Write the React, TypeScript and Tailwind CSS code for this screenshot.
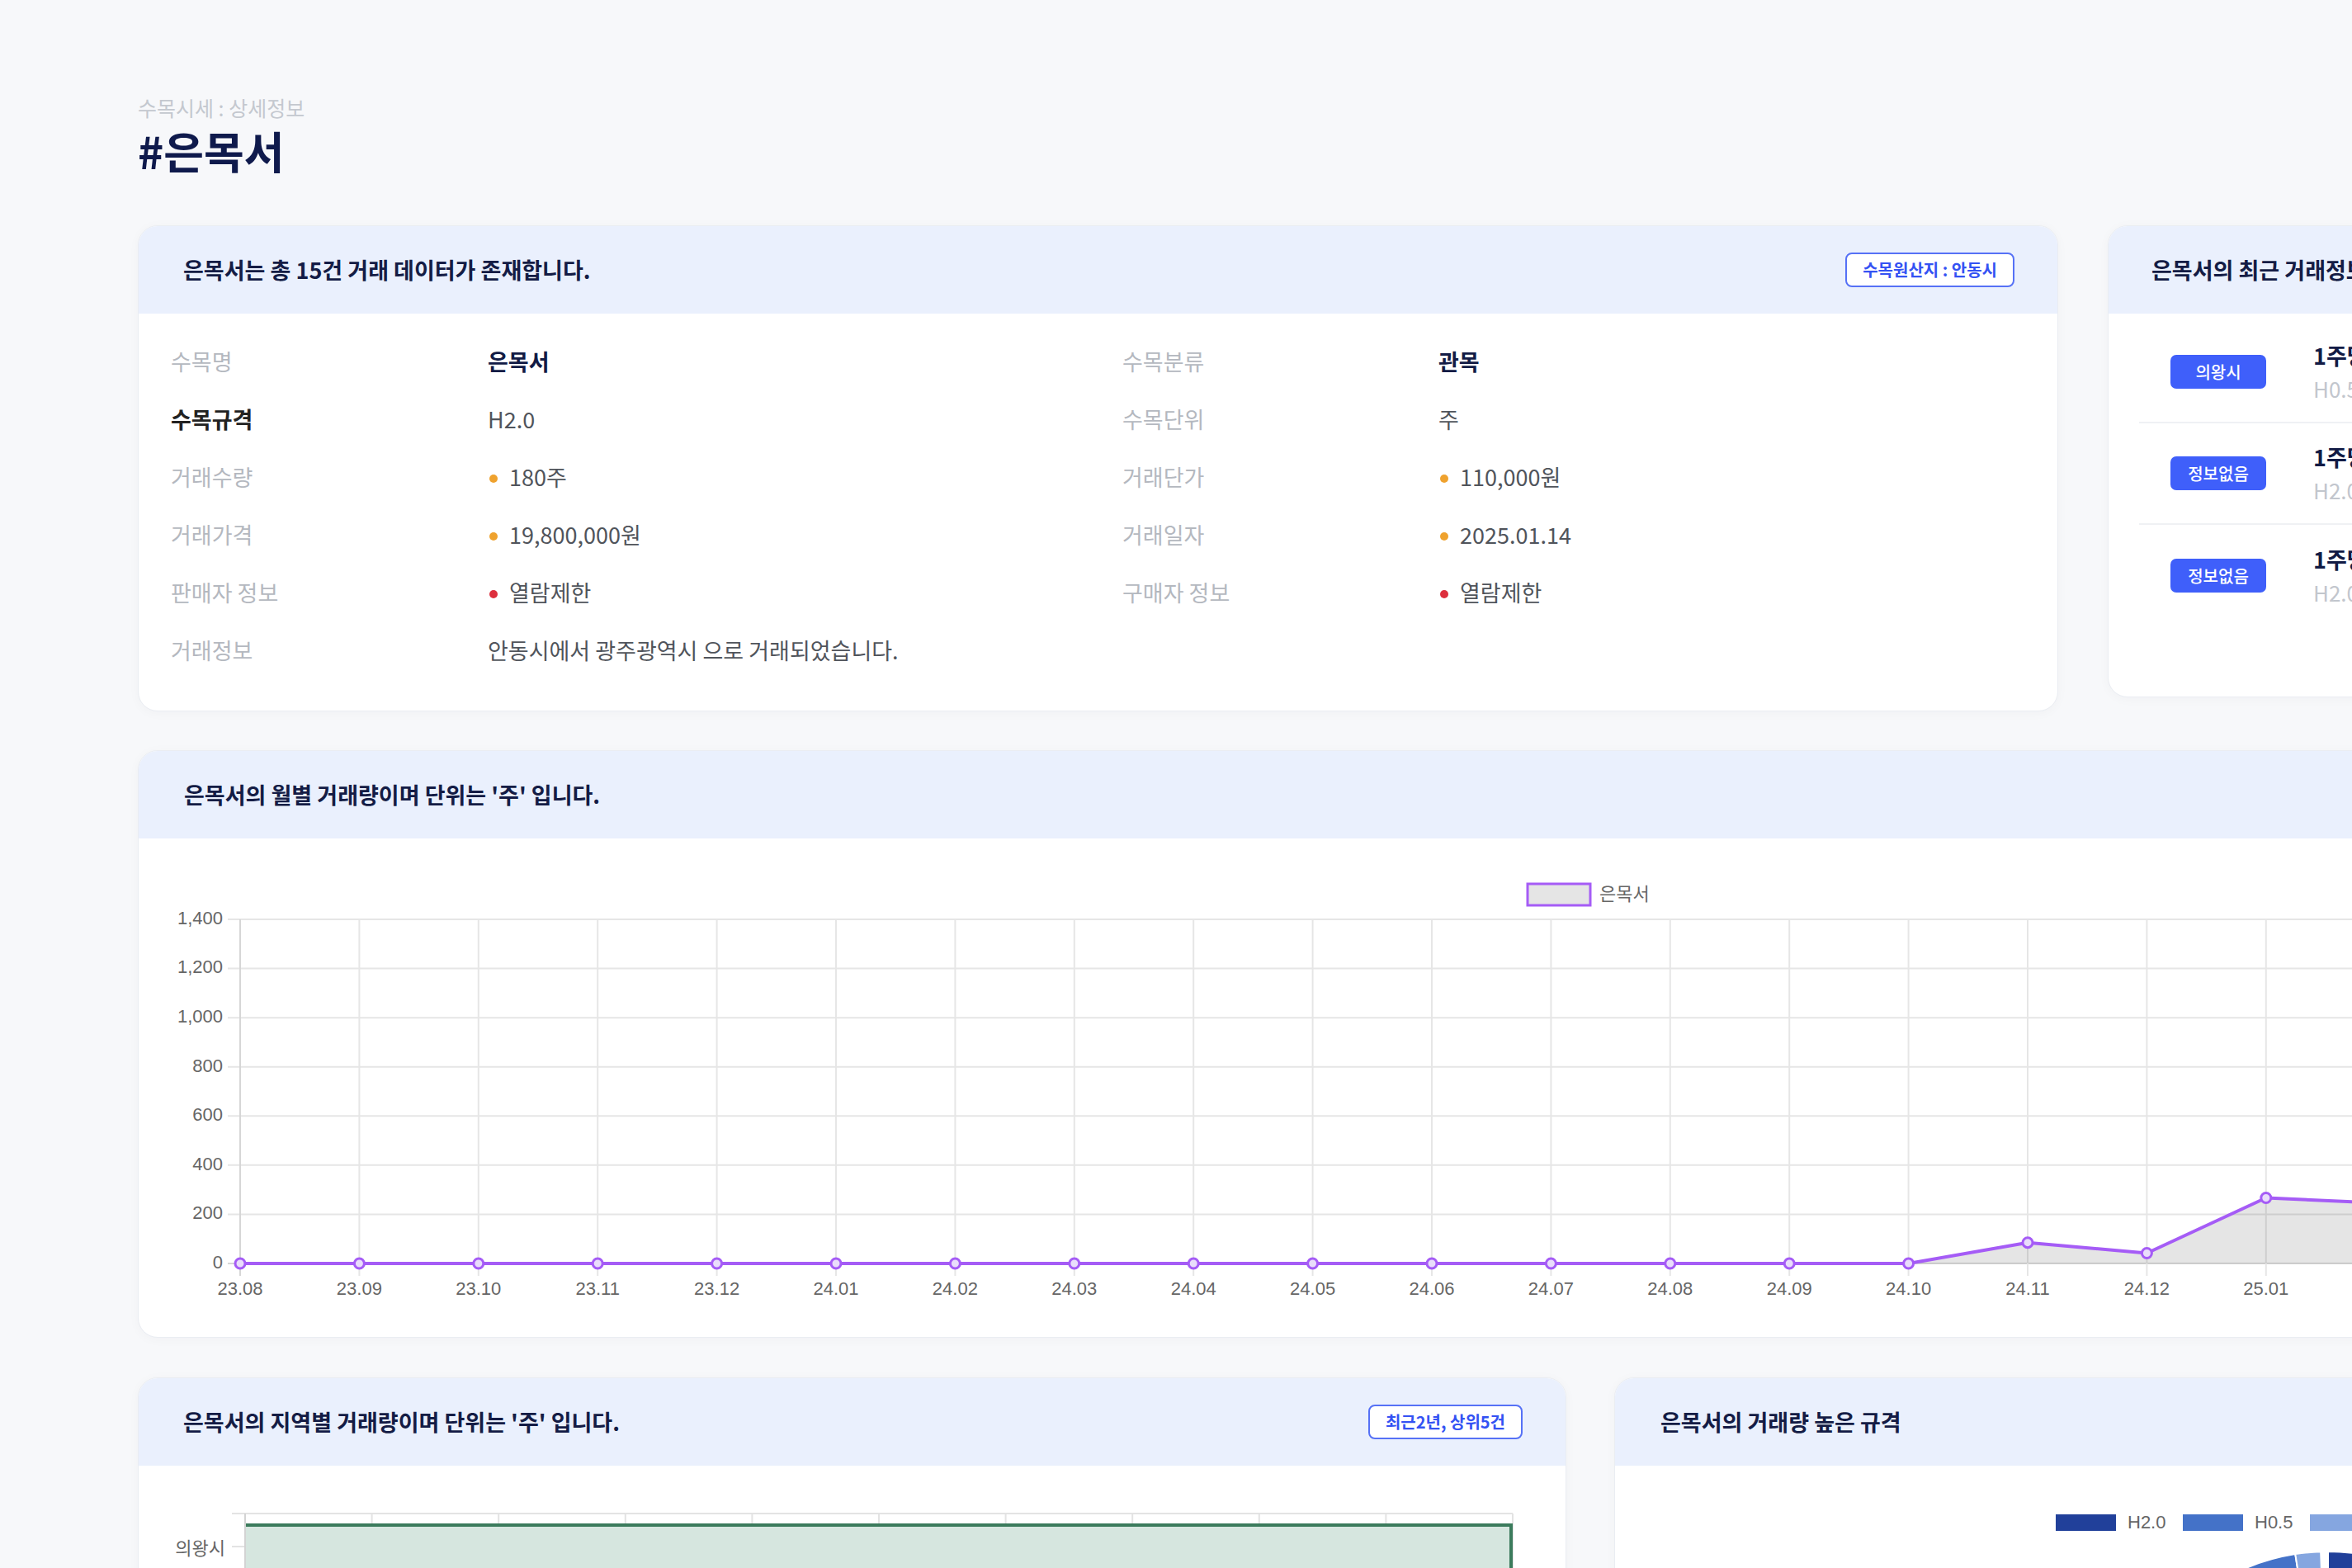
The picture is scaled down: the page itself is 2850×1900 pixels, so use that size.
import React from "react";

const months = [
  "23.08", "23.09", "23.10", "23.11", "23.12",
  "24.01", "24.02", "24.03", "24.04", "24.05", "24.06", "24.07", "24.08", "24.09", "24.10", "24.11", "24.12",
  "25.01", "25.02", "25.03", "25.04", "25.05", "25.06", "25.07",
];
const values = [0, 0, 0, 0, 0, 0, 0, 0, 0, 0, 0, 0, 0, 0, 0, 85, 42, 267, 245, 120, 60, 150, 90, 30];

const X0 = 123;
const STEP = 144.4;
const YT = 98;
const YB = 515;
const yOf = (v: number) => YB - (v / 1400) * (YB - YT);
const xOf = (i: number) => X0 + i * STEP;
const XR = xOf(months.length - 1);

function LineChart() {
  const pts = values.map((v, i) => `${xOf(i)},${yOf(v)}`).join(" ");
  const area = `M${xOf(0)},${YB} L${values.map((v, i) => `${xOf(i)},${yOf(v)}`).join(" L")} L${XR},${YB} Z`;
  const yTicks = [0, 200, 400, 600, 800, 1000, 1200, 1400];
  return (
    <svg width="3518" height="604" className="block">
      <rect x="1683" y="55" width="76" height="26" fill="#e5e5e5" stroke="#a55cf6" strokeWidth="3" />
      <text x="1770" y="69" fontSize="22" fill="#666" dominantBaseline="middle" fontFamily="Noto Sans CJK KR, sans-serif">
        은목서
      </text>
      {yTicks.map((t) => (
        <g key={t}>
          <line x1={X0 - 15} x2={XR} y1={yOf(t)} y2={yOf(t)} stroke={t === 0 ? "#d6d6d6" : "#e6e6e6"} strokeWidth="2" />
          <text x="102" y={yOf(t)} fontSize="22" fill="#666" textAnchor="end" dominantBaseline="middle" fontFamily="Liberation Sans, Arial, sans-serif">
            {t.toLocaleString("en-US")}
          </text>
        </g>
      ))}
      {months.map((m, i) => (
        <g key={m}>
          <line x1={xOf(i)} x2={xOf(i)} y1={YT} y2={YB + 15} stroke={i === 0 ? "#d6d6d6" : "#e6e6e6"} strokeWidth="2" />
          <text x={xOf(i)} y="547" fontSize="22" fill="#666" textAnchor="middle" dominantBaseline="middle" fontFamily="Liberation Sans, Arial, sans-serif">
            {m}
          </text>
        </g>
      ))}
      <path d={area} fill="rgba(0,0,0,0.1)" />
      <polyline points={pts} fill="none" stroke="#a55cf6" strokeWidth="4" strokeLinejoin="round" />
      {values.map((v, i) => (
        <circle key={i} cx={xOf(i)} cy={yOf(v)} r="6" fill="#e9ddfb" stroke="#a55cf6" strokeWidth="3" />
      ))}
    </svg>
  );
}

function BarChart() {
  const gx = Array.from({ length: 11 }, (_, i) => 129 + i * 153.6);
  const cats = ["의왕시", "안동시", "광주광역시", "정보없음", "기타"];
  const vals = [1, 0, 0, 0, 0];
  return (
    <svg width="1729" height="560" className="block">
      {cats.map((c, i) => {
        const top = 58 + i * 80;
        return (
          <g key={c}>
            <line x1="113" x2={gx[10]} y1={top} y2={top} stroke="#e3e3e3" strokeWidth="2" />
            <line x1="113" x2="129" y1={top + 40} y2={top + 40} stroke="#e3e3e3" strokeWidth="2" />
            <text x="105" y={top + 44} fontSize="22" fill="#666" textAnchor="end" dominantBaseline="middle" fontFamily="Noto Sans CJK KR, sans-serif">
              {c}
            </text>
          </g>
        );
      })}
      {gx.map((x, i) => (
        <line key={i} x1={x} x2={x} y1="58" y2="470" stroke={i === 0 ? "#d3d3d3" : "#e3e3e3"} strokeWidth="2" />
      ))}
      {vals.map((v, i) => {
        if (!v) return null;
        const top = 72 + i * 80;
        const right = 129 + v * (gx[10] - 129 - 2);
        return (
          <g key={i}>
            <rect x="130" y={top} width={right - 130} height="58" fill="#d6e6df" />
            <path d={`M130,${top} L${right},${top} L${right},${top + 58} L130,${top + 58}`} fill="none" stroke="#3b7b5c" strokeWidth="4" />
          </g>
        );
      })}
    </svg>
  );
}

function slice(cx: number, cy: number, r: number, a0: number, a1: number) {
  const rad = (a: number) => ((a - 90) * Math.PI) / 180;
  const x0 = cx + r * Math.cos(rad(a0));
  const y0 = cy + r * Math.sin(rad(a0));
  const x1 = cx + r * Math.cos(rad(a1));
  const y1 = cy + r * Math.sin(rad(a1));
  const large = a1 - a0 > 180 ? 1 : 0;
  return `M${cx},${cy} L${x0},${y0} A${r},${r} 0 ${large} 1 ${x1},${y1} Z`;
}

function PieChart() {
  const cx = 864;
  const cy = 358;
  const r = 254;
  const legend = [
    { l: "H2.0", c: "#21409a" },
    { l: "H0.5", c: "#4472c8" },
    { l: "H1.0", c: "#85a6e0" },
    { l: "H1.5", c: "#c3d4f1" },
  ];
  return (
    <svg width="1729" height="640" className="block">
      {legend.map((it, i) => (
        <g key={it.l}>
          <rect x={534 + i * 154} y="59" width="73" height="20" fill={it.c} />
          <text x={621 + i * 154} y="70" fontSize="22" fill="#666" dominantBaseline="middle" fontFamily="Liberation Sans, Arial, sans-serif">
            {it.l}
          </text>
        </g>
      ))}
      <path d={slice(cx, cy, r, 0, 290)} fill="#21409a" stroke="#fff" strokeWidth="2" />
      <path d={slice(cx, cy, r, 290, 351)} fill="#4472c8" stroke="#fff" strokeWidth="2" />
      <path d={slice(cx, cy, r, 351, 358)} fill="#85a6e0" stroke="#fff" strokeWidth="2" />
    </svg>
  );
}

function Dot({ color }: { color: string }) {
  return <span className={`inline-block w-[10px] h-[10px] rounded-full ml-[2px] mr-[14px] mt-[3px] ${color}`} />;
}

function Label({ children, strong }: { children: React.ReactNode; strong?: boolean }) {
  return (
    <div className={`h-[70px] flex items-center text-[27px] ${strong ? "font-bold text-[#222]" : "text-[#b4b8bf]"}`}>
      {children}
    </div>
  );
}

function Value({ children, strong, dot, span }: { children: React.ReactNode; strong?: boolean; dot?: string; span?: boolean }) {
  return (
    <div
      className={`h-[70px] flex items-center text-[27px] ${strong ? "font-bold text-[#121b45]" : "text-[#50545b]"} ${span ? "col-span-3" : ""}`}
    >
      {dot ? <Dot color={dot} /> : null}
      {children}
    </div>
  );
}

function CardHeader({ title, badge, px = "px-[55px]" }: { title: string; badge?: string; px?: string }) {
  return (
    <div className={`h-[106px] bg-[#eaf0fd] flex items-center justify-between ${px}`}>
      <div className="text-[27px] font-bold text-[#141c45] whitespace-nowrap">{title}</div>
      {badge ? (
        <div className="h-[42px] px-[19px] flex items-center rounded-[8px] border-2 border-[#5671f6] bg-white text-[20px] font-bold text-[#3452f3] whitespace-nowrap">
          {badge}
        </div>
      ) : null}
    </div>
  );
}

const cardCls = "rounded-[24px] bg-white border border-[#eaedf2] overflow-hidden shadow-[0_2px_14px_rgba(20,30,60,0.03)]";

function RecentRow({ badge, sub, last }: { badge: string; sub: string; last?: boolean }) {
  return (
    <div className={`h-[123px] flex items-center pl-[38px] ${last ? "" : "border-b-2 border-[#eff1f4]"}`}>
      <div className="w-[116px] h-[41px] rounded-[7px] bg-[#3f5ffa] text-white text-[20px] font-medium flex items-center justify-center shrink-0">
        {badge}
      </div>
      <div className="ml-[57px] flex flex-col whitespace-nowrap">
        <div className="text-[27px] leading-[40px] font-bold text-[#121b45]">1주당 110,000원</div>
        <div className="text-[26px] leading-[40px] text-[#c2c6cd]">{sub}</div>
      </div>
    </div>
  );
}

export default function App() {
  return (
    <div className="w-[2850px] h-[1900px] overflow-hidden bg-[#f7f8fa] font-['Noto_Sans_CJK_KR','Noto_Sans',sans-serif]">
      <div className="pl-[167px] pt-[114px] w-[3700px]">
        <div className="text-[25px] leading-[32px] text-[#c4c8cf]">수목시세 : 상세정보</div>
        <div className="mt-[4px] text-[53px] leading-[64px] font-bold text-[#0f1a4c]">#은목서</div>

        <div className="mt-[59px] flex items-start gap-[60px] w-[3520px]">
          <div className={`${cardCls} w-[2327px] shrink-0`}>
            <CardHeader title="은목서는 총 15건 거래 데이터가 존재합니다." badge="수목원산지 : 안동시" px="pl-[54px] pr-[52px]" />
            <div className="pt-[23px] pb-[38px] px-[39px] grid grid-cols-[384px_769px_383px_1fr]">
              <Label>수목명</Label>
              <Value strong>은목서</Value>
              <Label>수목분류</Label>
              <Value strong>관목</Value>

              <Label strong>수목규격</Label>
              <Value>H2.0</Value>
              <Label>수목단위</Label>
              <Value>주</Value>

              <Label>거래수량</Label>
              <Value dot="bg-[#efa22e]">180주</Value>
              <Label>거래단가</Label>
              <Value dot="bg-[#efa22e]">110,000원</Value>

              <Label>거래가격</Label>
              <Value dot="bg-[#efa22e]">19,800,000원</Value>
              <Label>거래일자</Label>
              <Value dot="bg-[#efa22e]">2025.01.14</Value>

              <Label>판매자 정보</Label>
              <Value dot="bg-[#dd2f3d]">열람제한</Value>
              <Label>구매자 정보</Label>
              <Value dot="bg-[#dd2f3d]">열람제한</Value>

              <Label>거래정보</Label>
              <Value span>안동시에서 광주광역시 으로 거래되었습니다.</Value>
            </div>
          </div>

          <div className={`${cardCls} w-[1133px] shrink-0`}>
            <CardHeader title="은목서의 최근 거래정보" px="px-[52px]" />
            <div className="pt-[10px] pb-[85px] px-[37px]">
              <RecentRow badge="의왕시" sub="H0.5 · 30주" />
              <RecentRow badge="정보없음" sub="H2.0 · 180주" />
              <RecentRow badge="정보없음" sub="H2.0 · 50주" last />
            </div>
          </div>
        </div>

        <div className={`${cardCls} mt-[47px] w-[3520px]`}>
          <CardHeader title="은목서의 월별 거래량이며 단위는 '주' 입니다." />
          <LineChart />
        </div>

        <div className="mt-[48px] flex items-start gap-[58px] w-[3520px]">
          <div className={`${cardCls} w-[1731px] shrink-0`}>
            <CardHeader title="은목서의 지역별 거래량이며 단위는 '주' 입니다." badge="최근2년, 상위5건" px="pl-[54px] pr-[52px]" />
            <BarChart />
          </div>
          <div className={`${cardCls} w-[1731px] shrink-0`}>
            <CardHeader title="은목서의 거래량 높은 규격" />
            <PieChart />
          </div>
        </div>
      </div>
    </div>
  );
}
